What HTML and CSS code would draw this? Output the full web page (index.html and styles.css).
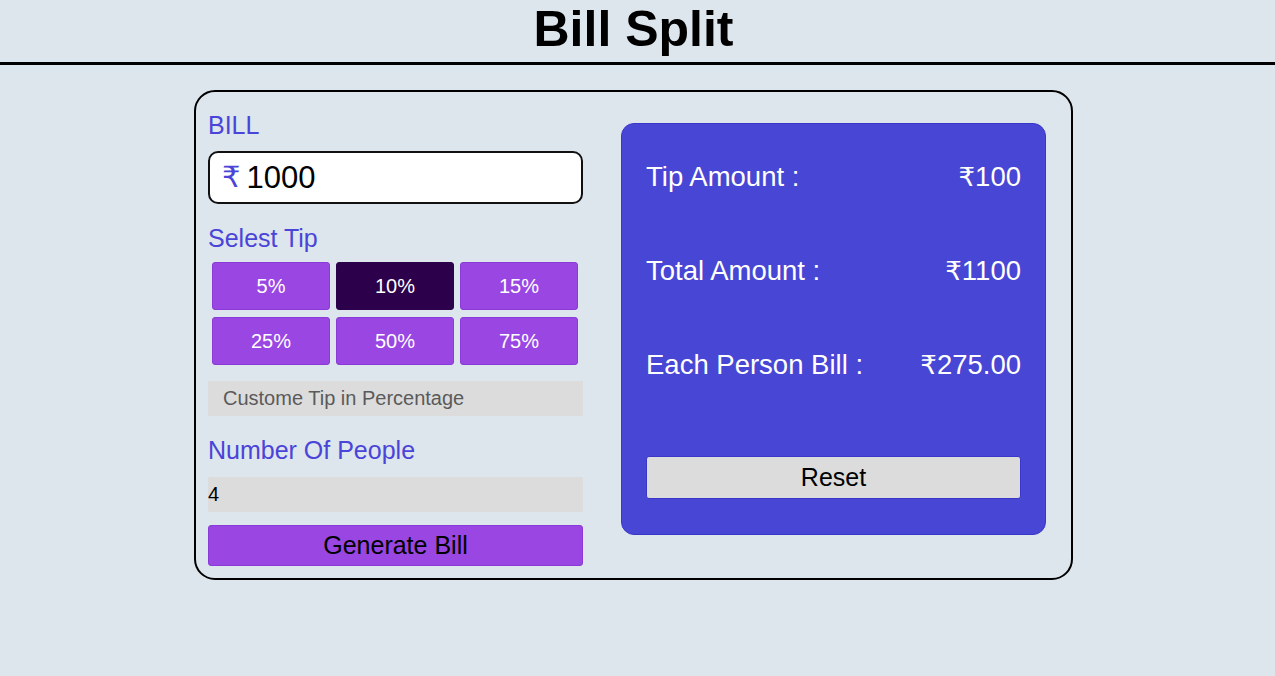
FILE: index.html
```html
<!DOCTYPE html>
<html lang="en">
<head>
<meta charset="UTF-8">
<title>Bill Split</title>
<link rel="stylesheet" href="styles.css">
</head>
<body>
<header class="header">
  <h1 class="title">Bill Split</h1>
</header>
<div class="page">
  <main class="card">
    <section class="left">
      <label class="label label-bill">BILL</label>
      <div class="bill-input">
        <span class="rupee">₹</span>
        <span class="bill-value">1000</span>
      </div>
      <label class="label label-tip">Selest Tip</label>
      <div class="tips">
        <button class="tip">5%</button>
        <button class="tip active">10%</button>
        <button class="tip">15%</button>
        <button class="tip">25%</button>
        <button class="tip">50%</button>
        <button class="tip">75%</button>
      </div>
      <div class="custom">Custome Tip in Percentage</div>
      <label class="label label-people">Number Of People</label>
      <div class="people">4</div>
      <button class="generate">Generate Bill</button>
    </section>
    <section class="result">
      <div class="row"><span>Tip Amount :</span><span><span class="r">₹</span>100</span></div>
      <div class="row"><span>Total Amount :</span><span><span class="r">₹</span>1100</span></div>
      <div class="row"><span>Each Person Bill :</span><span><span class="r">₹</span>275.00</span></div>
      <button class="reset">Reset</button>
    </section>
  </main>
</div>
</body>
</html>
```

FILE: styles.css
```css
* { box-sizing: border-box; }
html, body {
  margin: 0;
  padding: 0;
  background: #dde5ed;
  font-family: "Liberation Sans", Arial, sans-serif;
  height: 100%;
}
.header {
  height: 65px;
  border-bottom: 3px solid #000;
  display: flex;
  justify-content: center;
  padding-right: 8px;
}
.title {
  margin: 0;
  font-size: 50px;
  line-height: 59px;
  font-weight: bold;
  color: #000;
}
.page {
  padding-right: 8px;
}
.card {
  width: 879px;
  margin: 25px auto 0;
  border: 2px solid #000;
  border-radius: 21px;
  padding: 19px 24px 12px 12px;
  display: flex;
  gap: 38px;
  align-items: flex-start;
}
.left {
  width: 375px;
  display: flex;
  flex-direction: column;
}
.label {
  display: block;
  color: #4a44d8;
  font-size: 25px;
  line-height: 28px;
}
.label-bill { margin-bottom: 12px; }
.bill-input {
  height: 53px;
  background: #fff;
  border: 2px solid #111;
  border-radius: 10px;
  display: flex;
  align-items: center;
  padding-left: 12px;
  gap: 6px;
}
.rupee {
  color: #4a44d8;
  font-family: "DejaVu Sans", sans-serif;
  font-size: 29px;
  line-height: 1;
}
.bill-value {
  font-size: 31px;
  color: #000;
}
.label-tip { margin-top: 20px; margin-bottom: 10px; }
.tips {
  display: grid;
  grid-template-columns: repeat(3, 118px);
  column-gap: 6px;
  row-gap: 7px;
  padding: 0 4px;
}
.tip {
  height: 48px;
  background: #9946e3;
  border: 1px solid #8a3ad6;
  border-radius: 3px;
  color: #fff;
  font-family: inherit;
  font-size: 20px;
  padding: 0;
}
.tip.active { background: #2c004a; border-color: #2c004a; }
.custom {
  margin-top: 16px;
  height: 35px;
  background: #dcdcdc;
  color: #5a5a5a;
  font-size: 20px;
  line-height: 35px;
  padding-left: 15px;
}
.label-people { margin-top: 20px; margin-bottom: 13px; }
.people {
  height: 35px;
  background: #dcdcdc;
  color: #000;
  font-size: 20px;
  line-height: 35px;
  border-radius: 2px;
}
.generate {
  margin-top: 13px;
  height: 41px;
  background: #9946e3;
  border: 1px solid #8a3ad6;
  border-radius: 3px;
  color: #000;
  font-family: inherit;
  font-size: 25px;
  padding: 0;
}
.result {
  width: 425px;
  margin-top: 12px;
  background: #4846d4;
  border: 1px solid #3a37c8;
  border-radius: 13px;
  padding: 37px 24px 35px 24px;
  display: flex;
  flex-direction: column;
}
.row {
  display: flex;
  justify-content: space-between;
  align-items: center;
  height: 31px;
  color: #fff;
  font-size: 27.5px;
  line-height: 31px;
  margin-bottom: 63px;
}
.r {
  font-family: "DejaVu Sans", sans-serif;
  font-size: 26px;
  line-height: 1;
}
.row:nth-child(3) { margin-bottom: 76px; }
.reset {
  height: 43px;
  background: #dcdcdc;
  border: 1px solid #3a37c8;
  border-radius: 3px;
  color: #000;
  font-family: inherit;
  font-size: 25px;
  padding: 0;
}
```
